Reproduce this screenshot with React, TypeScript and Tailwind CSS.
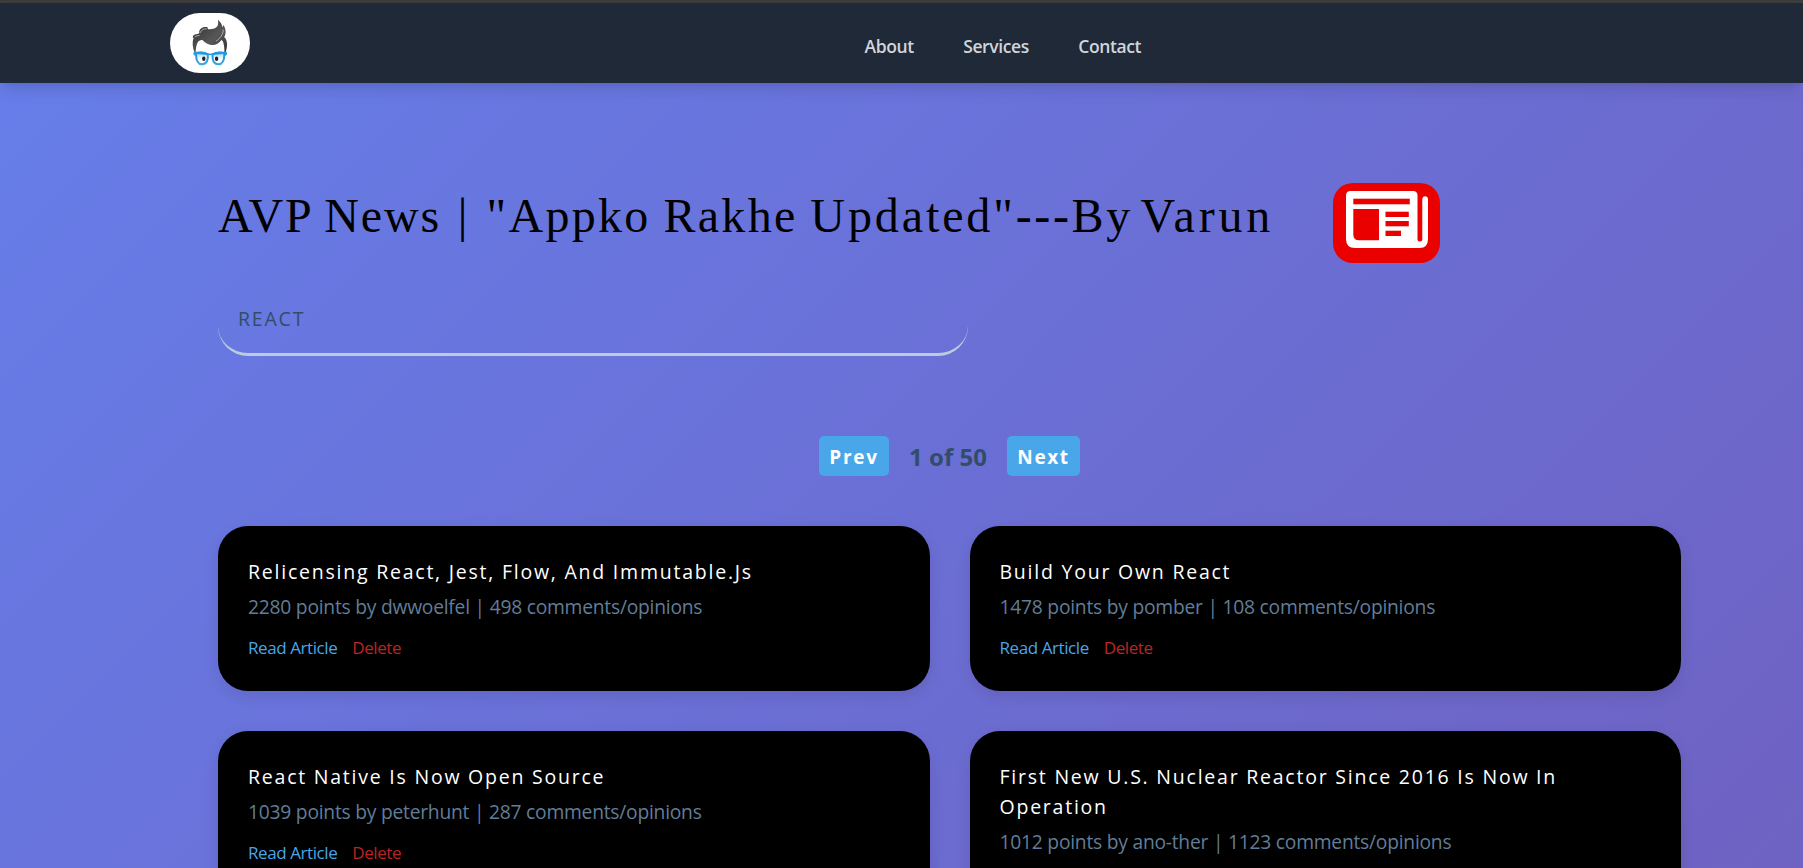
type Story = {
  title: string;
  points: number;
  author: string;
  comments: number;
};

const stories: Story[] = [
  { title: 'Relicensing React, Jest, Flow, And Immutable.Js', points: 2280, author: 'dwwoelfel', comments: 498 },
  { title: 'Build Your Own React', points: 1478, author: 'pomber', comments: 108 },
  { title: 'React Native Is Now Open Source', points: 1039, author: 'peterhunt', comments: 287 },
  { title: 'First New U.S. Nuclear Reactor Since 2016 Is Now In Operation', points: 1012, author: 'ano-ther', comments: 1123 },
];

function Logo() {
  return (
    <svg viewBox="0 0 80 60" className="h-[60px] w-20 shrink-0">
      <defs>
        <linearGradient id="hair" x1="0" y1="0" x2="1" y2="1">
          <stop offset="0" stopColor="#2f2f2f" />
          <stop offset="0.6" stopColor="#575757" />
          <stop offset="1" stopColor="#333" />
        </linearGradient>
        <linearGradient id="frame" x1="0" y1="0" x2="0" y2="1">
          <stop offset="0" stopColor="#1f8fd6" />
          <stop offset="1" stopColor="#35a8ea" />
        </linearGradient>
        <linearGradient id="lens" x1="0" y1="0" x2="0" y2="1">
          <stop offset="0" stopColor="#9ed6f5" />
          <stop offset="0.6" stopColor="#fff" />
        </linearGradient>
      </defs>
      <rect width="80" height="60" rx="30" fill="#fff" />
      <path
        fill="url(#hair)"
        d="M24.3 39 C22.6 34.5 22 29 23.6 25 C22.4 25 22.6 22.6 24.6 21.8 C26.6 21 28.4 21.3 29.2 20 C28.8 16 33 13 37.8 14.4 C37.4 15.3 37.8 16.6 39.5 16.2 C45 16 49.5 14.5 47.9 6.7 C51 9 52.5 12.5 52.2 14.3 C53 13.8 53.4 13 53.3 11.8 C56 15.5 56.4 21 54.2 24 C57.5 26.7 57.8 33 55.8 39 L54.4 39 C54.5 35.5 54.2 32.5 53.2 29.3 C52.6 27.8 52 27.4 51.4 27 C47.5 33 39 34.4 32.4 27 C29.5 27 27.8 28.3 26.9 31.2 C26.1 33.4 25.9 36 25.6 39 Z"
      />
      <path d="M30 20.2 C31 17 34 15.4 36.7 16 M24.6 24.2 C26 22.8 28.5 22.3 29.6 22.6 M46 28.2 C50 25.6 53.6 21 53.2 16.6" fill="none" stroke="#d8d8d8" strokeWidth="0.7" />
      <g fill="url(#lens)" stroke="url(#frame)" strokeWidth="2">
        <path d="M26 40.2 C30 39.3 34.5 39.5 37.8 41.3 C38.4 46.5 37 51.2 31.9 51.2 C27.6 51.2 26 47.3 26 40.2 Z" />
        <path d="M54.4 40.2 C50.4 39.3 45.9 39.5 42.6 41.3 C42 46.5 43.4 51.2 48.5 51.2 C52.8 51.2 54.4 47.3 54.4 40.2 Z" />
      </g>
      <path d="M23.5 39.2 C29 38.2 35 38.8 38 40.3 Q40.2 41 42.4 40.3 C45.4 38.8 51.4 38.2 57 39.2 L57 41.5 L55 43 L53 41 L43 42 Q40.2 42.2 37.4 42 L27.4 41 L25.4 43 L23.5 41.5 Z" fill="#229be0" />
      <ellipse cx="33.8" cy="45.8" rx="1.7" ry="2.2" fill="#222" />
      <ellipse cx="46.6" cy="45.8" rx="1.7" ry="2.2" fill="#222" />
    </svg>
  );
}

function NewsBadge() {
  return (
    <svg viewBox="0 0 107 80" className="h-20 w-[107px] shrink-0">
      <rect width="107" height="80" rx="20" fill="#eb0000" />
      <path
        fill="#fff"
        d="M17.5 8 H80 Q84.5 8 84.5 12.5 V57 A2.6 2.6 0 0 0 89.3 57 V15.7 A2.9 2.9 0 0 1 95 15.7 V56 Q95 65 86.5 65 H22 Q13 65 13 56 V12.5 Q13 8 17.5 8 Z"
      />
      <g fill="#eb0000">
        <rect x="20.3" y="15.7" width="56.5" height="5.6" />
        <path d="M20.3 26 H46 V57.3 H26 Q20.3 57.3 20.3 51.5 Z" />
        <rect x="52.5" y="28.7" width="23.3" height="5.3" />
        <rect x="52.5" y="38" width="23.3" height="5.3" />
        <rect x="52.5" y="47.7" width="15.5" height="5.3" />
      </g>
    </svg>
  );
}

function StoryCard({ story }: { story: Story }) {
  return (
    <article className="rounded-[30px] bg-black px-[30px] pt-[31px] pb-[31px] shadow-[0_5px_15px_rgba(0,0,0,0.1)]">
      <h4 className="text-[19.5px] leading-[30px] tracking-[1.77px] text-white">{story.title}</h4>
      <p className="mt-[5px] text-[19.25px] leading-[30px] tracking-[-0.24px] text-[#617d98]">
        {story.points} points by {story.author} | {story.comments} comments/opinions
      </p>
      <div className="mt-[13px] flex h-[25px] items-center gap-[15px] text-[17px] leading-[25px] tracking-[-0.42px]">
        <a className="text-[#49a6e9]">Read Article</a>
        <button className="text-[#bb2525]">Delete</button>
      </div>
    </article>
  );
}

export default function App() {
  return (
    <div className="h-[868px] overflow-hidden font-['Open_Sans','Noto_Sans',sans-serif]">
      <div className="h-[3050px] bg-[linear-gradient(135deg,#667eea_0%,#764ba2_100%)]">
        <div className="h-[3px] bg-[#3c3c3c]" />
        <nav className="relative flex h-20 items-center bg-[#1f2937] pl-[170px] shadow-lg">
          <Logo />
          <ul className="ml-[614.5px] flex gap-[49.5px] pt-1.5 text-[17.5px] leading-6 font-semibold tracking-[-0.4px] text-[#d1d5db]">
            <li>About</li>
            <li>Services</li>
            <li>Contact</li>
          </ul>
        </nav>

        <main className="w-[1681px] pl-[218px] pt-[100px]">
          <header className="flex h-20">
            <h1 className="w-[1115px] shrink-0 pt-[5px] font-['Liberation_Serif',serif] text-[48px] leading-[56px] tracking-[2.62px] [word-spacing:-1.5px] whitespace-nowrap text-black">
              <span className="tracking-[1.9px]">AVP News</span>
              <span className="[word-spacing:2px]"> | </span>
              <span className="tracking-[2.3px]">"Appko Rakhe </span>
              <span className="tracking-[2.9px]">Updated"</span>
              <span className="[word-spacing:-7px]">---By </span>
              <span className="tracking-[3.8px]">Varun</span>
            </h1>
            <NewsBadge />
          </header>

          <form className="mt-8">
            <input
              className="block h-[61px] w-[750px] rounded-[30px] border-b-[3px] border-[#bcccdc] bg-transparent px-5 pb-3 text-[19.5px] tracking-[1.8px] text-[#324d67] outline-none"
              defaultValue="REACT"
            />
          </form>

          <div className="mt-20 flex h-10 items-center justify-center">
            <button className="h-10 w-[70px] rounded-[5px] bg-[#49a6e9] pt-[3px] text-[19px] font-bold tracking-[1.7px] text-white">Prev</button>
            <p className="w-[118px] pt-0.5 text-center text-[24px] font-bold text-[#324d67]">1 of 50</p>
            <button className="h-10 w-[73px] rounded-[5px] bg-[#49a6e9] pt-[3px] text-[19px] font-bold tracking-[1.6px] text-white">Next</button>
          </div>

          <section className="mt-[50px] grid grid-cols-2 gap-10">
            {stories.map((story) => (
              <StoryCard key={story.title} story={story} />
            ))}
          </section>
        </main>
      </div>
    </div>
  );
}
